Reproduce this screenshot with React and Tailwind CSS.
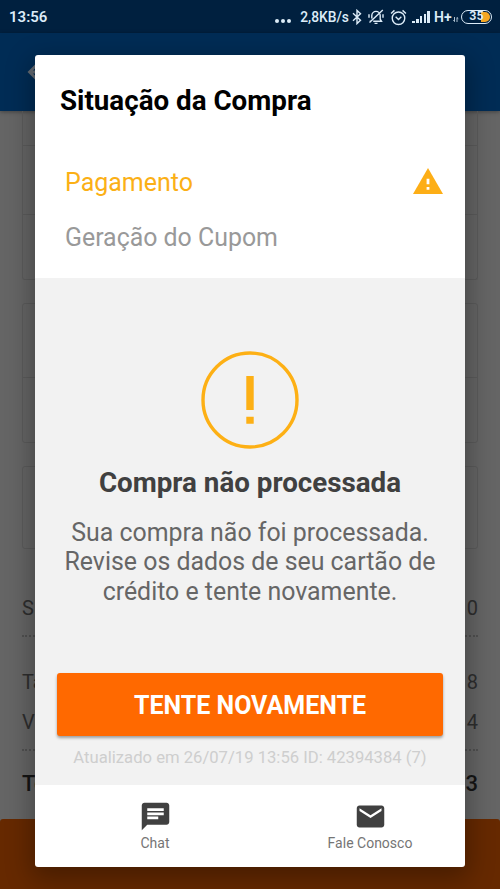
function StatusBar() {
  return (
    <div className="flex h-[33px] shrink-0 items-center justify-between bg-[#00203f] pl-[9px] pr-[8px] text-[#dcecf8]">
      <span className="mt-px text-[15px] font-semibold leading-[33px]">13:56</span>
      <div className="flex h-full items-center">
        <div className="mr-[9px] mt-[9px] flex gap-[2px]">
          <i className="size-[4px] rounded-full bg-current" />
          <i className="size-[4px] rounded-full bg-current" />
          <i className="size-[4px] rounded-full bg-current" />
        </div>
        <span className="mt-[2px] w-[49px] whitespace-nowrap text-[13.8px] font-medium leading-none">2,8KB/s</span>
        <svg className="ml-[3px] mt-px h-[16px] w-[10px]" viewBox="0 0 10 16" fill="none" stroke="currentColor" strokeWidth="1.4">
          <path d="M1 4.3 8.5 11.3 5 14.6V1.4L8.5 4.7 1 11.7" />
        </svg>
        <svg className="ml-[6px] mt-px h-[16px] w-[16px]" viewBox="0 0 16 16" fill="none" stroke="currentColor" strokeWidth="1.4">
          <path d="M3.8 9.6V6.6a4.2 4.2 0 0 1 8.4 0v3.6l1.3 2.1H5.2M6.5 14.4h3M14.8 1 1.5 13.4M1 5.3v3.4M15 5.3v3.4M2.5 12.3h-.7" />
        </svg>
        <svg className="ml-[6px] mt-px h-[17px] w-[17px]" viewBox="0 0 16 16" fill="none" stroke="currentColor" strokeWidth="1.3">
          <circle cx="8" cy="8.7" r="5.9" />
          <path d="m5.3 7.4 2.7 2.5 2.7-2.5M1 4.2 4.2 1.3M15 4.2l-3.2-2.9" />
        </svg>
        <div className="ml-[5px] flex h-[12px] items-end gap-[1.2px]">
          <i className="h-[2px] w-[2.6px] bg-current" />
          <i className="h-[4px] w-[2.6px] bg-current" />
          <i className="h-[6.5px] w-[2.6px] bg-current" />
          <i className="h-[9px] w-[2.6px] bg-current" />
          <i className="h-[12px] w-[2.6px] bg-current" />
        </div>
        <span className="ml-[4px] mt-px w-[17px] text-[14px] font-semibold leading-none">H+</span>
        <svg className="ml-[2px] mt-[5px] h-[5px] w-[6px]" viewBox="0 0 6 5" fill="none" stroke="currentColor" strokeWidth="0.8">
          <path d="M1.5 0v4.5L.3 3.3M4 5V.5l1.3 1.2" />
        </svg>
        <div className="ml-[2px] flex h-[14px] w-[31px] items-center justify-center rounded-full border-[1.3px] border-current p-[1px]">
          <div className="flex h-full w-full items-center justify-center rounded-full bg-[linear-gradient(90deg,transparent_66%,#f5a623_66%)] text-[12.5px] font-semibold leading-none">
            35
          </div>
        </div>
      </div>
    </div>
  );
}

function Row({ label, value, className }) {
  return (
    <div className={"flex items-center justify-between " + className}>
      <span>{label}</span>
      <span>{value}</span>
    </div>
  );
}

function Page() {
  return (
    <div className="flex h-full flex-col bg-[#656565]">
      <StatusBar />
      <div className="flex h-[78px] shrink-0 items-center bg-[#002c55] pl-[27px] text-[#646b73] shadow-[0_1px_4px_rgba(0,0,0,0.35)]">
        <svg className="h-[18px] w-[20px]" viewBox="0 0 20 18" fill="none" stroke="currentColor" strokeWidth="2.8">
          <path d="M9 2.5 2.5 9 9 15.5M3 9h16" />
        </svg>
      </div>
      <div className="mx-[22px] flex flex-col">
        <div className="h-[169px] rounded-b-[3px] border border-t-0 border-[#5b5b5b]">
          <div className="h-[35px] border-b border-[#5b5b5b]" />
          <div className="h-[69px] border-b border-[#5b5b5b]" />
        </div>
        <div className="mt-[23px] h-[140px] rounded-[3px] border border-[#5b5b5b]">
          <div className="h-[74px] border-b border-[#5b5b5b]" />
        </div>
        <div className="mt-[23px] h-[83px] rounded-[3px] border border-[#5b5b5b]" />
        <div className="mt-[46px] text-[20px] text-[#2e2e2e]">
          <Row label="S" value="0" className="h-[26px]" />
          <div className="mt-[14px] border-t-2 border-dotted border-[#505050]" />
          <Row label="Ta" value="8" className="mt-[32px] h-[26px]" />
          <Row label="V" value="4" className="mt-[14px] h-[26px]" />
          <div className="mt-[14px] border-t-2 border-dotted border-[#505050]" />
          <Row label="To" value="3" className="mt-[19px] h-[26px] text-[22px] font-medium text-[#151515]" />
        </div>
      </div>
      <div className="mt-auto h-[70px] shrink-0 rounded-t-[3px] bg-[#662900]" />
    </div>
  );
}

function Dialog() {
  return (
    <div className="absolute left-[35px] top-[55px] flex h-[811.5px] w-[430px] flex-col overflow-hidden rounded-[3px] bg-white shadow-[0_8px_26px_4px_rgba(0,0,0,0.3)]">
      <div className="flex h-[223px] shrink-0 flex-col">
        <h1 className="ml-[25px] mt-[29px] whitespace-nowrap text-[27.75px] font-bold leading-[34px] text-black">Situação da Compra</h1>
        <div className="ml-[30px] mr-[22px] mt-[48px] flex h-[32px] items-center justify-between">
          <span className="mt-px text-[25px] text-[#fbb016]">Pagamento</span>
          <svg className="mt-[-3px] h-[26px] w-[30px]" viewBox="0 0 30 26">
            <path fill="#fdae16" d="M15 0 30 26H0Z" />
            <path fill="#fff" d="M13.6 10.7h2.8v5.6h-2.8zM13.6 19h2.8v2.7h-2.8z" />
          </svg>
        </div>
        <span className="ml-[30px] mt-[24px] text-[24.9px] leading-[32px] text-[#999]">Geração do Cupom</span>
      </div>
      <div className="flex h-[507px] shrink-0 flex-col items-center bg-[#f2f2f2]">
        <svg className="mt-[73px] size-[98px] shrink-0" viewBox="0 0 98 98">
          <circle cx="49" cy="49" r="47" fill="none" stroke="#fdb015" strokeWidth="3.4" />
          <path fill="#fdb015" d="M45.3 25h7.4v34h-7.4zM45.3 65.7h7.4v7h-7.4z" />
        </svg>
        <h2 className="mt-[16px] whitespace-nowrap text-[27.75px] font-bold leading-[36px] text-[#404040]">Compra não processada</h2>
        <p className="mt-[17px] whitespace-nowrap text-center text-[24.9px] leading-[29.3px] text-[#666]">
          Sua compra não foi processada.
          <br />
          Revise os dados de seu cartão de
          <br />
          crédito e tente novamente.
        </p>
        <button className="mt-[67px] h-[63px] w-[386px] shrink-0 whitespace-nowrap rounded-[3px] bg-[#ff6900] pt-[3px] text-[25px] font-bold text-white shadow-[0_2px_3px_rgba(0,0,0,0.35)]">
          TENTE NOVAMENTE
        </button>
        <span className="mt-[12px] whitespace-nowrap text-[16.65px] leading-[20px] text-[#cecece]">Atualizado em 26/07/19 13:56 ID: 42394384 (7)</span>
      </div>
      <div className="ml-[12.5px] grid grow grid-cols-[215px_215px] text-[14px] leading-[18px] text-[#757575]">
        <div className="flex flex-col items-center">
          <svg className="mt-[15px] size-[33px]" viewBox="0 0 24 24" fill="#404040">
            <path d="M20 2H4c-1.1 0-1.99.9-1.99 2L2 22l4-4h14c1.1 0 2-.9 2-2V4c0-1.1-.9-2-2-2zM6 9h12v2H6V9zm8 5H6v-2h8v2zm4-6H6V6h12v2z" />
          </svg>
          <span className="mt-[1px]">Chat</span>
        </div>
        <div className="flex flex-col items-center">
          <svg className="mt-[15px] size-[33px]" viewBox="0 0 24 24" fill="#404040">
            <path d="M20 4H4c-1.1 0-1.99.9-1.99 2L2 18c0 1.1.9 2 2 2h16c1.1 0 2-.9 2-2V6c0-1.1-.9-2-2-2zm0 4-8 5-8-5V6l8 5 8-5v2z" />
          </svg>
          <span className="mt-[1px] whitespace-nowrap">Fale Conosco</span>
        </div>
      </div>
    </div>
  );
}

export default function App() {
  return (
    <div className="relative h-[889px] w-[500px] overflow-hidden font-[Roboto,sans-serif]">
      <Page />
      <Dialog />
    </div>
  );
}
